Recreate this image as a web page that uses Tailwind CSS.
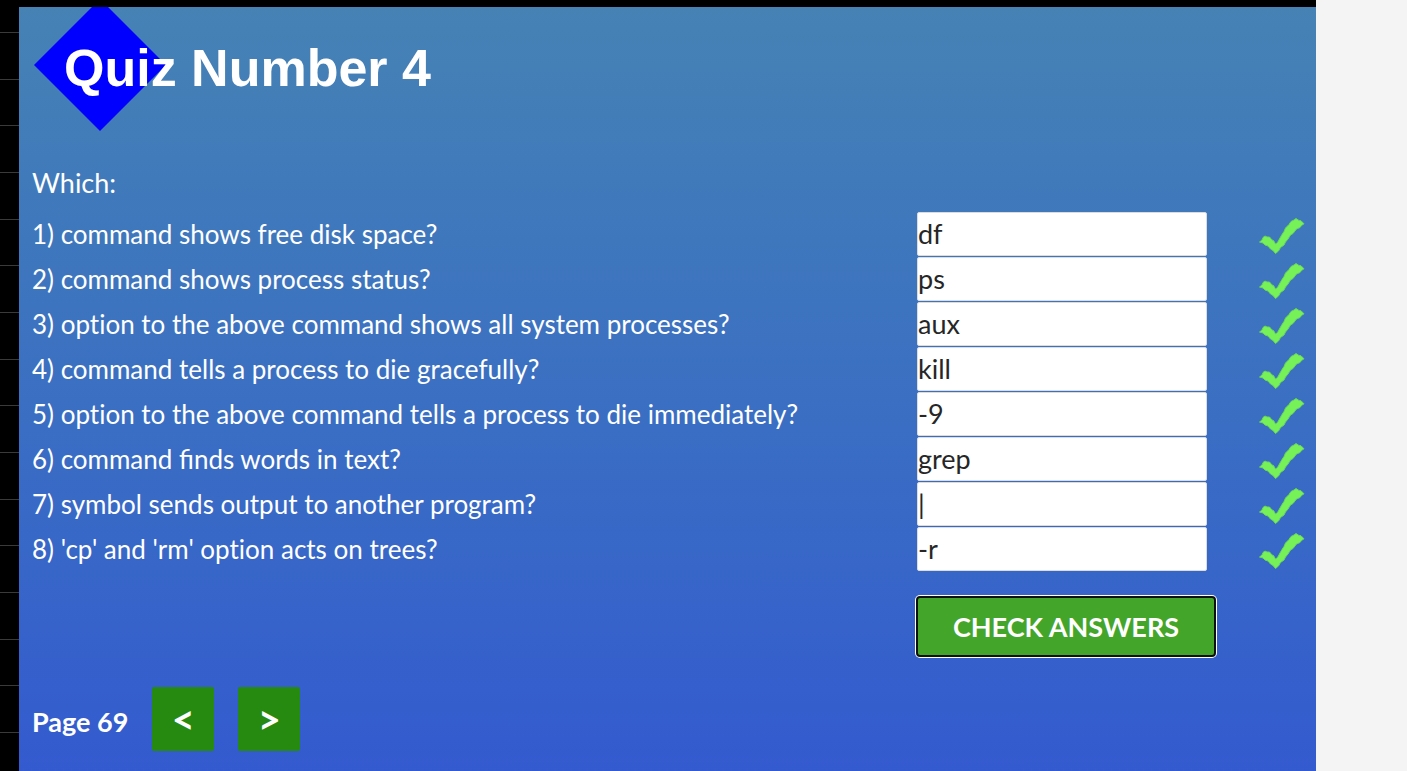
<!DOCTYPE html>
<html lang="en">
<head>
<meta charset="utf-8">
<meta name="viewport" content="width=device-width, initial-scale=1">
<title>Quiz Number 4</title>
<script src="https://cdn.jsdelivr.net/npm/@tailwindcss/browser@4"></script>
</head>
<body class="bg-[#f4f4f4] font-['Lato',sans-serif]">
<svg class="hidden" aria-hidden="true">
  <symbol id="tick" viewBox="0 0 46 38">
    <path d="M0.500 24L3 22L4 19.500L6 18L8 19L10.500 19L13 22L14.500 22.500L16.500 26L18.500 24.500L21 20L23 16.500L25 13.500L26.500 10L30 6.500L32 3.500L35 2L37 0.500L40 2.500L42 2.700L45 5.800L42.500 7.500L41 9.500L37.500 11L34 15.500L31.500 17L29 21L26.500 24L25 27L21.500 29.500L19.500 33L16.500 35.500L14 32.500L11.500 31L9 28L6 27L4 25Z" fill="#76f157" stroke="#6ad65a" stroke-width="1" stroke-linejoin="round"/>
  </symbol>
</svg>
<div class="flex min-h-screen pr-[91px]">
  <div class="flex grow bg-black pt-[7px]">
    <div class="flex w-[19px] shrink-0 flex-col justify-between pt-[25px] pb-[38px]" aria-hidden="true">
      <i class="h-px bg-[#3a3a3a]"></i><i class="h-px bg-[#3a3a3a]"></i><i class="h-px bg-[#3a3a3a]"></i><i class="h-px bg-[#3a3a3a]"></i>
      <i class="h-px bg-[#3a3a3a]"></i><i class="h-px bg-[#3a3a3a]"></i><i class="h-px bg-[#3a3a3a]"></i><i class="h-px bg-[#3a3a3a]"></i>
      <i class="h-px bg-[#3a3a3a]"></i><i class="h-px bg-[#3a3a3a]"></i><i class="h-px bg-[#3a3a3a]"></i><i class="h-px bg-[#3a3a3a]"></i>
      <i class="h-px bg-[#3a3a3a]"></i><i class="h-px bg-[#3a3a3a]"></i><i class="h-px bg-[#3a3a3a]"></i><i class="h-px bg-[#3a3a3a]"></i>
    </div>
    <main class="grow overflow-hidden bg-linear-to-b from-[#4682b4] to-[#345acf] pl-[13px] text-[27px] leading-9 text-white">
      <header class="relative h-[124px]">
        <svg class="absolute top-0 left-[2px] h-[124px] w-[132px]" viewBox="0 0 132 124" aria-hidden="true"><path d="M0 58L66 -8L132 58L66 124Z" fill="#0000ff"/></svg>
        <h1 class="relative pt-[31px] pl-8 font-['Liberation_Sans',sans-serif] text-[52px] leading-[60px] font-bold">Quiz Number 4</h1>
      </header>
      <p class="pt-[34px]">Which:</p>
      <form class="pt-[10px]" onsubmit="return false">
        <table class="w-full">
          <tbody>
            <tr class="h-[45px]"><td class="p-0 text-[26px]"><label for="q1">1) command shows free disk space?</label></td><td class="w-[343px] p-0"><input id="q1" value="df" class="block h-11 w-[290px] rounded-xs border border-[#dcdcdc] bg-white text-[#262626]"></td><td class="w-14 p-0"><svg class="mt-[7px] -ml-px h-[38px] w-[46px]" role="img" aria-label="Correct"><use href="#tick"/></svg></td></tr>
            <tr class="h-[45px]"><td class="p-0 text-[26px]"><label for="q2">2) command shows process status?</label></td><td class="p-0"><input id="q2" value="ps" class="block h-11 w-[290px] rounded-xs border border-[#dcdcdc] bg-white text-[#262626]"></td><td class="p-0"><svg class="mt-[7px] -ml-px h-[38px] w-[46px]" role="img" aria-label="Correct"><use href="#tick"/></svg></td></tr>
            <tr class="h-[45px]"><td class="p-0 text-[26px] [font-variant-ligatures:none]"><label for="q3">3) option to the above command shows all system processes?</label></td><td class="p-0"><input id="q3" value="aux" class="block h-11 w-[290px] rounded-xs border border-[#dcdcdc] bg-white text-[#262626]"></td><td class="p-0"><svg class="mt-[7px] -ml-px h-[38px] w-[46px]" role="img" aria-label="Correct"><use href="#tick"/></svg></td></tr>
            <tr class="h-[45px]"><td class="p-0 text-[26px]"><label for="q4">4) command tells a process to die gracefully?</label></td><td class="p-0"><input id="q4" value="kill" class="block h-11 w-[290px] rounded-xs border border-[#dcdcdc] bg-white text-[#262626]"></td><td class="p-0"><svg class="mt-[7px] -ml-px h-[38px] w-[46px]" role="img" aria-label="Correct"><use href="#tick"/></svg></td></tr>
            <tr class="h-[45px]"><td class="p-0 text-[26px] [font-variant-ligatures:none]"><label for="q5">5) option to the above command tells a process to die immediately?</label></td><td class="p-0"><input id="q5" value="-9" class="block h-11 w-[290px] rounded-xs border border-[#dcdcdc] bg-white text-[#262626]"></td><td class="p-0"><svg class="mt-[7px] -ml-px h-[38px] w-[46px]" role="img" aria-label="Correct"><use href="#tick"/></svg></td></tr>
            <tr class="h-[45px]"><td class="p-0 text-[26px]"><label for="q6">6) command finds words in text?</label></td><td class="p-0"><input id="q6" value="grep" class="block h-11 w-[290px] rounded-xs border border-[#dcdcdc] bg-white text-[#262626]"></td><td class="p-0"><svg class="mt-[7px] -ml-px h-[38px] w-[46px]" role="img" aria-label="Correct"><use href="#tick"/></svg></td></tr>
            <tr class="h-[45px]"><td class="p-0 text-[26px]"><label for="q7">7) symbol sends output to another program?</label></td><td class="p-0"><input id="q7" value="|" class="block h-11 w-[290px] rounded-xs border border-[#dcdcdc] bg-white text-[#262626]"></td><td class="p-0"><svg class="mt-[7px] -ml-px h-[38px] w-[46px]" role="img" aria-label="Correct"><use href="#tick"/></svg></td></tr>
            <tr class="h-[45px]"><td class="p-0 text-[26px] [font-variant-ligatures:none]"><label for="q8">8) 'cp' and 'rm' option acts on trees?</label></td><td class="p-0"><input id="q8" value="-r" class="block h-11 w-[290px] rounded-xs border border-[#dcdcdc] bg-white text-[#262626]"></td><td class="p-0"><svg class="mt-[7px] -ml-px h-[38px] w-[46px]" role="img" aria-label="Correct"><use href="#tick"/></svg></td></tr>
          </tbody>
        </table>
        <div class="flex justify-end pt-[25px] pr-[100px]">
          <button class="h-[61px] w-[300px] rounded-sm border-2 border-[#101010] bg-[#43a52a] font-bold ring-1 ring-white">CHECK ANSWERS</button>
        </div>
      </form>
      <nav class="flex items-center pt-[30px] font-bold">
        <span class="mr-6 pt-[6px]">Page 69</span>
        <button class="mr-6 h-16 w-[62px] rounded-xs bg-[#258a0f] text-[40px]">&lt;</button>
        <button class="h-16 w-[62px] rounded-xs bg-[#258a0f] text-[40px]">&gt;</button>
      </nav>
    </main>
  </div>
</div>
</body>
</html>
